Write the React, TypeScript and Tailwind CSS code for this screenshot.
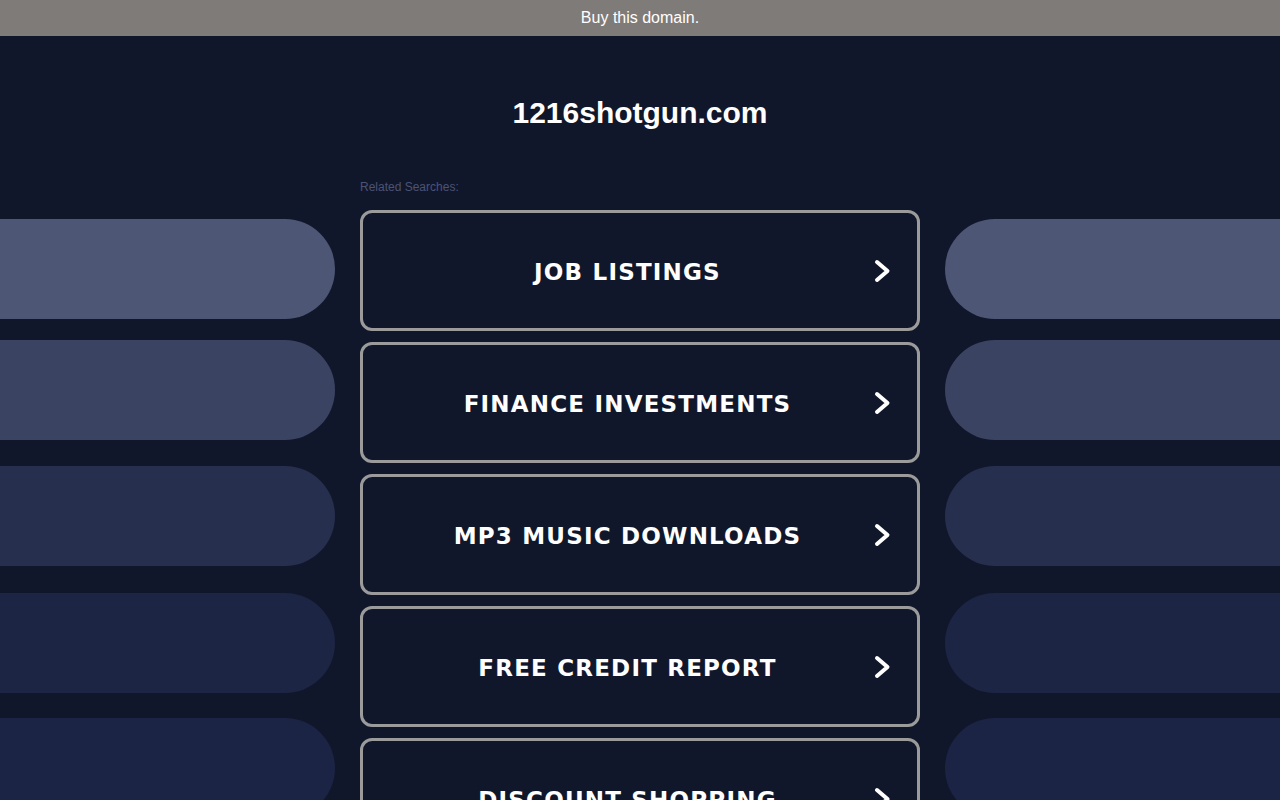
const searches = [
  "JOB LISTINGS",
  "FINANCE INVESTMENTS",
  "MP3 MUSIC DOWNLOADS",
  "FREE CREDIT REPORT",
  "DISCOUNT SHOPPING",
];

// side decoration pills, top to bottom
const pills = [
  { bg: "bg-[#4d5775]", mt: "mt-0" },
  { bg: "bg-[#3a4361]", mt: "mt-[21px]" },
  { bg: "bg-[#262f4e]", mt: "mt-[26px]" },
  { bg: "bg-[#1d2545]", mt: "mt-[27px]" },
  { bg: "bg-[#1c2445]", mt: "mt-[25px]" },
];

function Chevron() {
  return (
    <svg viewBox="0 0 18 26" className="w-[18px] h-[26px] shrink-0 -ml-[19px] mr-[26px]" fill="none">
      <polyline points="4,4 14.5,13 4,22" stroke="#ffffff" strokeWidth="4" strokeLinecap="round" strokeLinejoin="round" />
    </svg>
  );
}

function SidePills({ side }: { side: "left" | "right" }) {
  return (
    <div className="flex flex-col pt-[183px]">
      {pills.map((p, i) => (
        <div
          key={i}
          className={`h-[100px] ${p.bg} ${p.mt} ${side === "left" ? "rounded-r-[50px]" : "rounded-l-[50px]"}`}
        />
      ))}
    </div>
  );
}

export default function App() {
  return (
    <div className="h-screen overflow-hidden bg-[#11172b]" style={{ fontFamily: "Arial, 'Liberation Sans', sans-serif" }}>
      <div className="h-[36px] bg-[#7f7b78] flex items-center justify-center">
        <span className="text-white text-[16px] font-['Liberation_Sans',Arial,sans-serif]">Buy this domain.</span>
      </div>

      <div className="flex gap-[25px]">
        <div className="w-[335px] shrink-0">
          <SidePills side="left" />
        </div>

        <div className="w-[560px] shrink-0 flex flex-col pt-[59px]">
          <h1 className="text-center text-white font-bold text-[30px] leading-[36px] font-['Liberation_Sans',Arial,sans-serif]">
            1216shotgun.com
          </h1>
          <p className="mt-[48px] text-[12px] leading-[16px] text-[#4b5374] font-['Liberation_Sans',Arial,sans-serif]">
            Related Searches:
          </p>
          <div className="mt-[15px] flex flex-col gap-[11px]">
            {searches.map((s) => (
              <a
                key={s}
                href="#"
                className="h-[121px] rounded-[12px] border-[3px] border-[#9b9b9b] flex items-center"
              >
                <span className="flex-1 text-center text-white font-bold text-[23px] leading-[28px] pt-[2px] tracking-[1.2px] font-['DejaVu_Sans',Verdana,sans-serif]">
                  {s}
                </span>
                <Chevron />
              </a>
            ))}
          </div>
        </div>

        <div className="flex-1">
          <SidePills side="right" />
        </div>
      </div>
    </div>
  );
}
